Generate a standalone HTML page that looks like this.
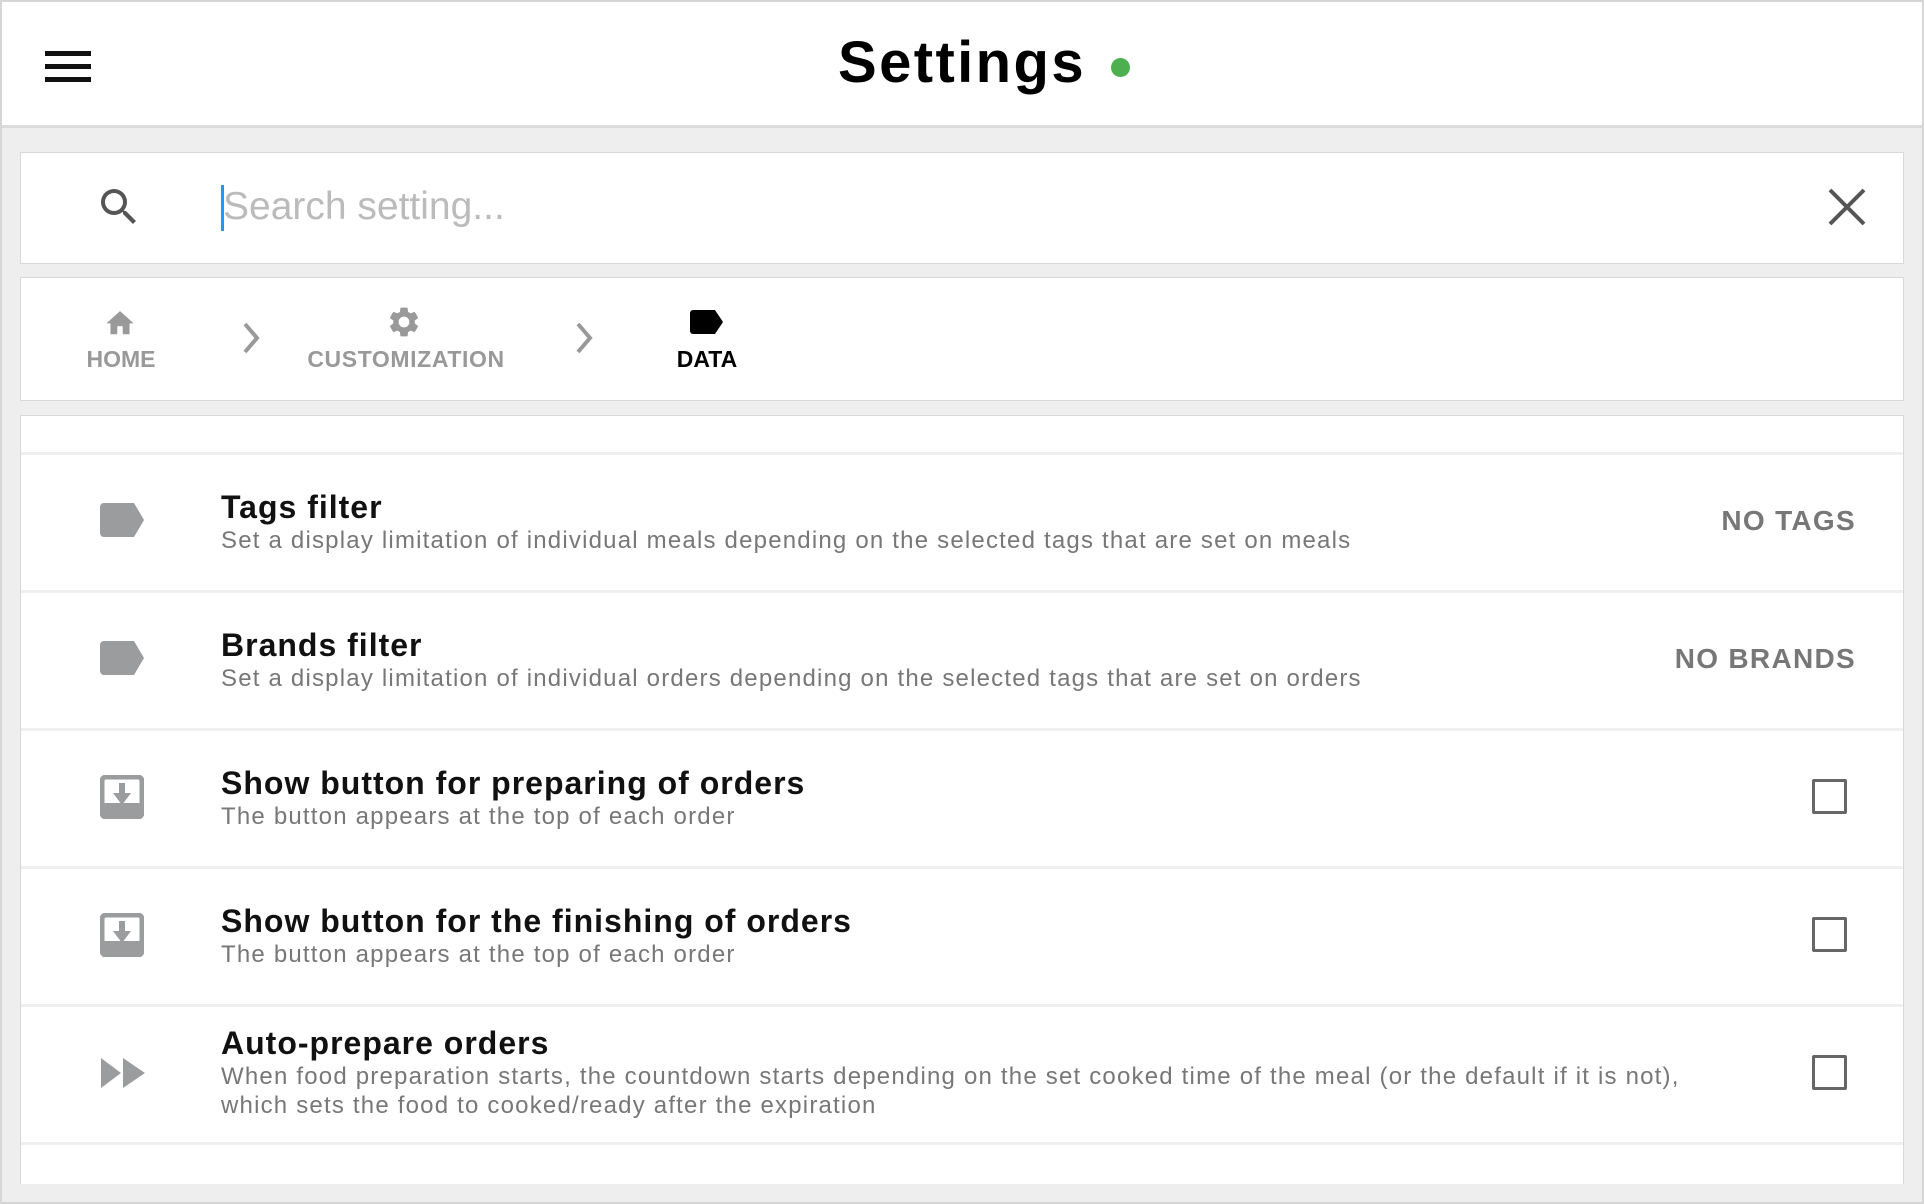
<!DOCTYPE html>
<html><head><meta charset="utf-8"><style>
*{margin:0;padding:0;box-sizing:border-box}
body{width:1924px;height:1204px;background:#eeeeee;font-family:"Liberation Sans",sans-serif;position:relative;overflow:hidden}
.abs{position:absolute}
.frame{left:0;top:0;width:1924px;height:1204px;border:2px solid #d6d6d6;pointer-events:none;z-index:10}
.header{left:0;top:0;width:1924px;height:128px;background:#fff;border-bottom:3px solid #dcdcdc}
.card{background:#fff;border:1px solid #d8d8d8}
.t{position:absolute;white-space:nowrap}
.title{font-size:32px;font-weight:bold;color:#111;letter-spacing:1px}
.desc{font-size:24px;color:#777;letter-spacing:1.2px}
.sep{position:absolute;left:0;width:100%;height:3px;background:#efefef}
.val{position:absolute;right:47px;font-size:28px;font-weight:bold;color:#777;letter-spacing:1.3px}
.cb{position:absolute;width:35px;height:35px;border:3px solid #666;border-radius:2px}
.bc{position:absolute;font-size:23px;font-weight:bold;color:#999;transform:translateX(-50%)}
</style></head><body>
<div class="abs frame"></div>
<div class="abs header">
  <div class="abs" style="left:45px;top:51px;width:46px;height:5px;background:#111"></div>
  <div class="abs" style="left:45px;top:64px;width:46px;height:5px;background:#111"></div>
  <div class="abs" style="left:45px;top:77px;width:46px;height:5px;background:#111"></div>
  <div class="t" style="left:838px;top:29px;font-size:58px;font-weight:bold;color:#000;letter-spacing:2.4px">Settings</div>
  <div class="abs" style="left:1111px;top:58px;width:19px;height:19px;border-radius:50%;background:#4caf50"></div>
</div>
<div class="abs card" style="left:20px;top:152px;width:1884px;height:112px">
  <svg class="abs" style="left:74px;top:30px" width="48" height="48" viewBox="0 0 24 24"><path fill="#555" d="M15.5 14h-.79l-.28-.27A6.47 6.47 0 0 0 16 9.5 6.5 6.5 0 1 0 9.5 16c1.61 0 3.09-.59 4.23-1.57l.27.28v.79l5 4.99L20.49 19l-4.99-5zm-6 0C7.01 14 5 11.99 5 9.5S7.01 5 9.5 5 14 7.01 14 9.5 11.99 14 9.5 14z"/></svg>
  <div class="abs" style="left:200px;top:32px;width:3px;height:46px;background:#2196f3"></div>
  <div class="t" style="left:202px;top:32px;font-size:39px;color:#bbb">Search setting...</div>
  <svg class="abs" style="left:1806px;top:34px" width="40" height="40" viewBox="0 0 40 40"><path d="M3 3L37 37M37 3L3 37" stroke="#555" stroke-width="4"/></svg>
</div>
<div class="abs card" style="left:20px;top:277px;width:1884px;height:124px">
  <svg class="abs" style="left:82px;top:29px" width="34" height="30" viewBox="0 0 24 22"><path fill="#999" d="M10 20v-6h4v6h5v-8h3L12 3 2 12h3v8z"/></svg>
  <div class="bc" style="left:100px;top:68px">HOME</div>
  <svg class="abs" style="left:220px;top:43px" width="20" height="34" viewBox="0 0 20 34"><path d="M4 3l12 14L4 31" stroke="#999" stroke-width="4" fill="none"/></svg>
  <svg class="abs" style="left:365px;top:26px" width="36" height="36" viewBox="0 0 24 24"><path fill="#999" d="M19.14 12.94c.04-.3.06-.61.06-.94 0-.32-.02-.64-.07-.94l2.030-1.58a.49.49 0 0 0 .12-.61l-1.92-3.32a.49.49 0 0 0-.59-.22l-2.39.96c-.5-.38-1.03-.7-1.62-.94l-.36-2.54a.48.48 0 0 0-.48-.41h-3.84c-.24 0-.43.17-.47.41l-.36 2.54c-.59.24-1.130.57-1.62.94l-2.39-.96a.48.48 0 0 0-.59.22L2.74 8.87c-.12.21-.08.47.12.61l2.03 1.58c-.05.3-.09.63-.09.94s.02.64.07.94l-2.03 1.58a.49.49 0 0 0-.12.61l1.92 3.32c.12.22.37.29.59.22l2.39-.96c.5.38 1.03.7 1.62.94l.36 2.54c.05.24.24.41.48.41h3.84c.24 0 .44-.17.47-.41l.36-2.54c.59-.24 1.13-.56 1.62-.94l2.39.96c.22.08.47 0 .59-.22l1.92-3.32c.12-.22.07-.47-.12-.61l-2.01-1.58zM12 15.6c-1.98 0-3.6-1.62-3.6-3.6s1.62-3.6 3.6-3.6 3.6 1.62 3.6 3.6-1.62 3.6-3.6 3.6z"/></svg>
  <div class="bc" style="left:385px;top:68px;letter-spacing:0.6px">CUSTOMIZATION</div>
  <svg class="abs" style="left:553px;top:43px" width="20" height="34" viewBox="0 0 20 34"><path d="M4 3l12 14L4 31" stroke="#999" stroke-width="4" fill="none"/></svg>
  <svg class="abs" style="left:669px;top:32px" width="34" height="24" viewBox="0 0 34 24"><path fill="#000" d="M3 0h22l8 12-8 12H3a3 3 0 0 1-3-3V3a3 3 0 0 1 3-3z"/></svg>
  <div class="bc" style="left:686px;top:68px;color:#000">DATA</div>
</div>
<div class="abs card" style="left:20px;top:415px;width:1884px;height:769px;border-bottom:none">
  <div class="sep" style="top:36px"></div>
  <div class="sep" style="top:174px"></div>
  <div class="sep" style="top:312px"></div>
  <div class="sep" style="top:450px"></div>
  <div class="sep" style="top:588px"></div>
  <div class="sep" style="top:726px"></div>
  <svg class="abs" style="left:79px;top:87px" width="45" height="34" viewBox="0 0 45 34"><path fill="#9a9c9e" d="M4 0h30l10 17-10 17H4a4 4 0 0 1-4-4V4a4 4 0 0 1 4-4z"/></svg>
  <div class="t title" style="left:200px;top:73px">Tags filter</div>
  <div class="t desc" style="left:200px;top:111px">Set a display limitation of individual meals depending on the selected tags that are set on meals</div>
  <div class="t val" style="top:89px">NO TAGS</div>
  <svg class="abs" style="left:79px;top:225px" width="45" height="34" viewBox="0 0 45 34"><path fill="#9a9c9e" d="M4 0h30l10 17-10 17H4a4 4 0 0 1-4-4V4a4 4 0 0 1 4-4z"/></svg>
  <div class="t title" style="left:200px;top:211px">Brands filter</div>
  <div class="t desc" style="left:200px;top:249px">Set a display limitation of individual orders depending on the selected tags that are set on orders</div>
  <div class="t val" style="top:227px">NO BRANDS</div>
  <svg class="abs" style="left:79px;top:359px" width="44" height="44" viewBox="0 0 44 44"><rect x="2" y="2" width="40" height="40" rx="4" fill="none" stroke="#9a9c9e" stroke-width="5"/><rect x="2" y="28" width="40" height="14" fill="#9a9c9e"/><path d="M19 8h6v10h6L22 30 13 18h6z" fill="#9a9c9e"/></svg>
  <div class="t title" style="left:200px;top:349px">Show button for preparing of orders</div>
  <div class="t desc" style="left:200px;top:387px">The button appears at the top of each order</div>
  <div class="cb" style="left:1791px;top:363px"></div>
  <svg class="abs" style="left:79px;top:497px" width="44" height="44" viewBox="0 0 44 44"><rect x="2" y="2" width="40" height="40" rx="4" fill="none" stroke="#9a9c9e" stroke-width="5"/><rect x="2" y="28" width="40" height="14" fill="#9a9c9e"/><path d="M19 8h6v10h6L22 30 13 18h6z" fill="#9a9c9e"/></svg>
  <div class="t title" style="left:200px;top:487px">Show button for the finishing of orders</div>
  <div class="t desc" style="left:200px;top:525px">The button appears at the top of each order</div>
  <div class="cb" style="left:1791px;top:501px"></div>
  <svg class="abs" style="left:80px;top:642px" width="44" height="30" viewBox="0 0 44 30"><path fill="#9a9c9e" d="M0 0l20 15L0 30zM22 0l22 15-22 15z"/></svg>
  <div class="t title" style="left:200px;top:609px">Auto-prepare orders</div>
  <div class="t desc" style="left:200px;top:647px">When food preparation starts, the countdown starts depending on the set cooked time of the meal (or the default if it is not),</div>
  <div class="t desc" style="left:200px;top:676px">which sets the food to cooked/ready after the expiration</div>
  <div class="cb" style="left:1791px;top:639px"></div>
</div>
</body></html>
